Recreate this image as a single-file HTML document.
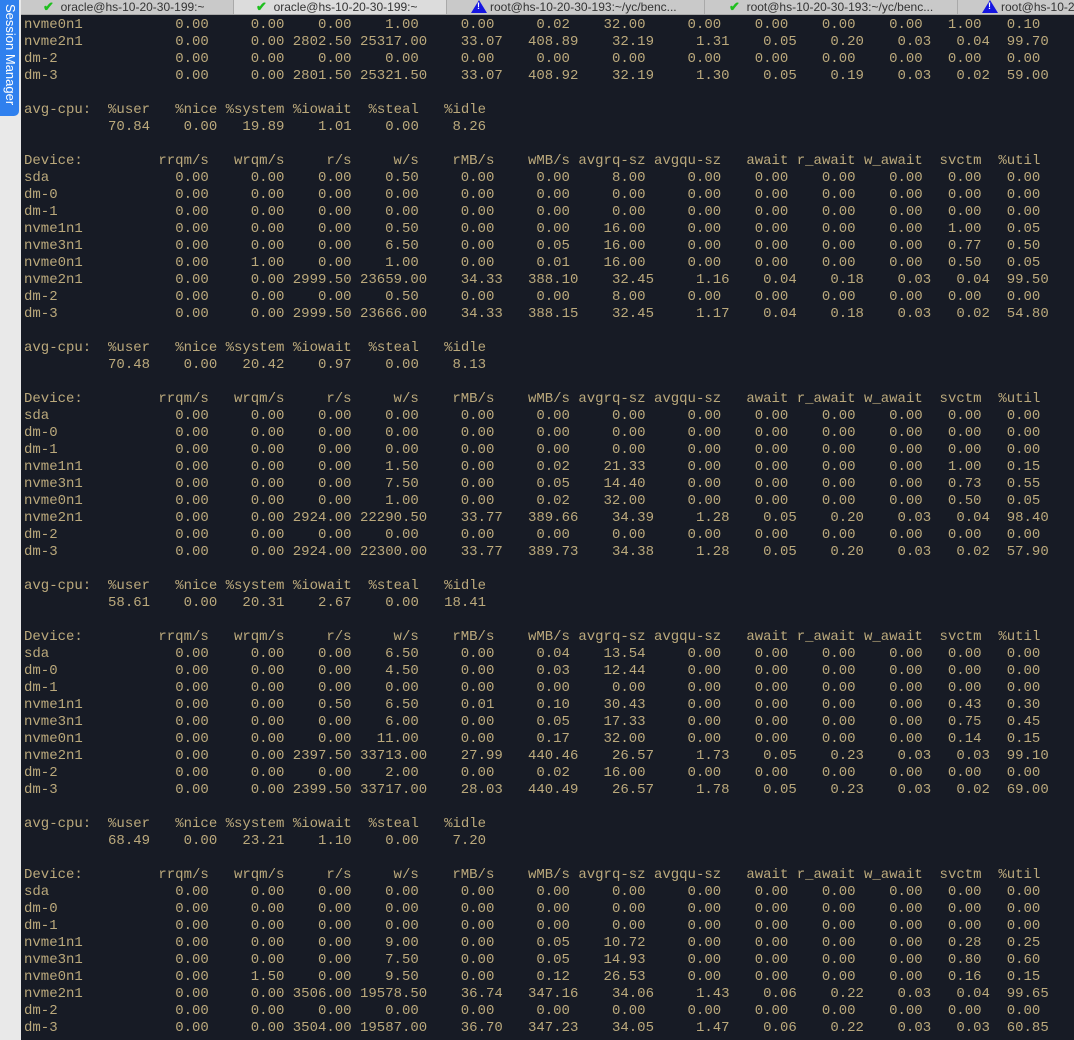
<!DOCTYPE html>
<html><head><meta charset="utf-8"><style>
*{margin:0;padding:0;box-sizing:border-box}
body{width:1074px;height:1040px;overflow:hidden;background:#e9e9e9;position:relative;font-family:"Liberation Sans",sans-serif}
#side{position:absolute;left:0;top:0;width:20px;height:1040px;background:#e9e9e9}
#sm{position:absolute;left:0;top:0;width:19px;height:116px;background:#2f80ee;border-radius:0 0 5px 0}
#sm span{position:absolute;left:19px;top:4px;transform-origin:0 0;transform:rotate(90deg);color:#fff;font-size:13px;white-space:nowrap;line-height:18px}
#tabs{position:absolute;left:21px;top:0;width:1053px;height:15px;background:#c9c9c9;border-bottom:1px solid #a8a8a8;z-index:2}
.t{position:absolute;top:0;height:14px;font-size:12px;line-height:13px;color:#333;border-right:1px solid #a9a9a9;white-space:nowrap;overflow:hidden}
.t.act{background:#dcdcdc}
.ck{color:#1fbf1f;font-weight:bold;font-size:13px}
.wr{display:inline-block;width:0;height:0;border-left:8px solid transparent;border-right:8px solid transparent;border-bottom:13px solid #1515e0;vertical-align:-2px;position:relative;margin-right:3px}
.wr:after{content:"!";position:absolute;left:-2px;top:1px;color:#fff;font-size:9px;font-weight:bold;line-height:11px}
#term{position:absolute;left:21px;top:15px;width:1053px;height:1025px;background:#171b25;color:#bba97c;font-family:"Liberation Mono",monospace;font-size:14px;line-height:17px;padding-left:3px;padding-top:2px}
.r{height:17px;white-space:nowrap}
.r u{display:inline-block;text-decoration:none;text-align:right;margin-left:1ch;white-space:pre}
.r u:nth-child(1){margin-left:0;text-align:left;min-width:13ch}
.r u:nth-child(2),.r u:nth-child(3){min-width:8ch}
.r u:nth-child(4),.r u:nth-child(5){min-width:7ch}
.r u:nth-child(6),.r u:nth-child(7),.r u:nth-child(8),.r u:nth-child(9){min-width:8ch}
.r u:nth-child(10),.r u:nth-child(11),.r u:nth-child(12){min-width:7ch}
.r u:nth-child(13),.r u:nth-child(14){min-width:6ch}
.l{height:17px;white-space:pre}
</style></head><body>
<div id="side"><div id="sm"><span>Session Manager</span></div></div>
<div id="tabs">
<div class="t" style="left:0;width:213px;padding-left:22px"><span class="ck">✔</span>&nbsp; oracle@hs-10-20-30-199:~</div>
<div class="t act" style="left:213px;width:213px;padding-left:22px"><span class="ck">✔</span>&nbsp; oracle@hs-10-20-30-199:~</div>
<div class="t" style="left:426px;width:258px;padding-left:24px"><span class="wr"></span>root@hs-10-20-30-193:~/yc/benc...</div>
<div class="t" style="left:684px;width:253px;padding-left:24px"><span class="ck">✔</span>&nbsp; root@hs-10-20-30-193:~/yc/benc...</div>
<div class="t" style="left:937px;width:116px;padding-left:24px;border-right:none"><span class="wr"></span>root@hs-10-20-30-193</div>
</div>
<div id="term"><div class="r"><u>nvme0n1</u><u>0.00</u><u>0.00</u><u>0.00</u><u>1.00</u><u>0.00</u><u>0.02</u><u>32.00</u><u>0.00</u><u>0.00</u><u>0.00</u><u>0.00</u><u>1.00</u><u>0.10</u></div>
<div class="r"><u>nvme2n1</u><u>0.00</u><u>0.00</u><u>2802.50</u><u>25317.00</u><u>33.07</u><u>408.89</u><u>32.19</u><u>1.31</u><u>0.05</u><u>0.20</u><u>0.03</u><u>0.04</u><u>99.70</u></div>
<div class="r"><u>dm-2</u><u>0.00</u><u>0.00</u><u>0.00</u><u>0.00</u><u>0.00</u><u>0.00</u><u>0.00</u><u>0.00</u><u>0.00</u><u>0.00</u><u>0.00</u><u>0.00</u><u>0.00</u></div>
<div class="r"><u>dm-3</u><u>0.00</u><u>0.00</u><u>2801.50</u><u>25321.50</u><u>33.07</u><u>408.92</u><u>32.19</u><u>1.30</u><u>0.05</u><u>0.19</u><u>0.03</u><u>0.02</u><u>59.00</u></div>
<div class="l"> </div>
<div class="l">avg-cpu:  %user   %nice %system %iowait  %steal   %idle</div>
<div class="l">          70.84    0.00   19.89    1.01    0.00    8.26</div>
<div class="l"> </div>
<div class="r"><u>Device:</u><u>rrqm/s</u><u>wrqm/s</u><u>r/s</u><u>w/s</u><u>rMB/s</u><u>wMB/s</u><u>avgrq-sz</u><u>avgqu-sz</u><u>await</u><u>r_await</u><u>w_await</u><u>svctm</u><u>%util</u></div>
<div class="r"><u>sda</u><u>0.00</u><u>0.00</u><u>0.00</u><u>0.50</u><u>0.00</u><u>0.00</u><u>8.00</u><u>0.00</u><u>0.00</u><u>0.00</u><u>0.00</u><u>0.00</u><u>0.00</u></div>
<div class="r"><u>dm-0</u><u>0.00</u><u>0.00</u><u>0.00</u><u>0.00</u><u>0.00</u><u>0.00</u><u>0.00</u><u>0.00</u><u>0.00</u><u>0.00</u><u>0.00</u><u>0.00</u><u>0.00</u></div>
<div class="r"><u>dm-1</u><u>0.00</u><u>0.00</u><u>0.00</u><u>0.00</u><u>0.00</u><u>0.00</u><u>0.00</u><u>0.00</u><u>0.00</u><u>0.00</u><u>0.00</u><u>0.00</u><u>0.00</u></div>
<div class="r"><u>nvme1n1</u><u>0.00</u><u>0.00</u><u>0.00</u><u>0.50</u><u>0.00</u><u>0.00</u><u>16.00</u><u>0.00</u><u>0.00</u><u>0.00</u><u>0.00</u><u>1.00</u><u>0.05</u></div>
<div class="r"><u>nvme3n1</u><u>0.00</u><u>0.00</u><u>0.00</u><u>6.50</u><u>0.00</u><u>0.05</u><u>16.00</u><u>0.00</u><u>0.00</u><u>0.00</u><u>0.00</u><u>0.77</u><u>0.50</u></div>
<div class="r"><u>nvme0n1</u><u>0.00</u><u>1.00</u><u>0.00</u><u>1.00</u><u>0.00</u><u>0.01</u><u>16.00</u><u>0.00</u><u>0.00</u><u>0.00</u><u>0.00</u><u>0.50</u><u>0.05</u></div>
<div class="r"><u>nvme2n1</u><u>0.00</u><u>0.00</u><u>2999.50</u><u>23659.00</u><u>34.33</u><u>388.10</u><u>32.45</u><u>1.16</u><u>0.04</u><u>0.18</u><u>0.03</u><u>0.04</u><u>99.50</u></div>
<div class="r"><u>dm-2</u><u>0.00</u><u>0.00</u><u>0.00</u><u>0.50</u><u>0.00</u><u>0.00</u><u>8.00</u><u>0.00</u><u>0.00</u><u>0.00</u><u>0.00</u><u>0.00</u><u>0.00</u></div>
<div class="r"><u>dm-3</u><u>0.00</u><u>0.00</u><u>2999.50</u><u>23666.00</u><u>34.33</u><u>388.15</u><u>32.45</u><u>1.17</u><u>0.04</u><u>0.18</u><u>0.03</u><u>0.02</u><u>54.80</u></div>
<div class="l"> </div>
<div class="l">avg-cpu:  %user   %nice %system %iowait  %steal   %idle</div>
<div class="l">          70.48    0.00   20.42    0.97    0.00    8.13</div>
<div class="l"> </div>
<div class="r"><u>Device:</u><u>rrqm/s</u><u>wrqm/s</u><u>r/s</u><u>w/s</u><u>rMB/s</u><u>wMB/s</u><u>avgrq-sz</u><u>avgqu-sz</u><u>await</u><u>r_await</u><u>w_await</u><u>svctm</u><u>%util</u></div>
<div class="r"><u>sda</u><u>0.00</u><u>0.00</u><u>0.00</u><u>0.00</u><u>0.00</u><u>0.00</u><u>0.00</u><u>0.00</u><u>0.00</u><u>0.00</u><u>0.00</u><u>0.00</u><u>0.00</u></div>
<div class="r"><u>dm-0</u><u>0.00</u><u>0.00</u><u>0.00</u><u>0.00</u><u>0.00</u><u>0.00</u><u>0.00</u><u>0.00</u><u>0.00</u><u>0.00</u><u>0.00</u><u>0.00</u><u>0.00</u></div>
<div class="r"><u>dm-1</u><u>0.00</u><u>0.00</u><u>0.00</u><u>0.00</u><u>0.00</u><u>0.00</u><u>0.00</u><u>0.00</u><u>0.00</u><u>0.00</u><u>0.00</u><u>0.00</u><u>0.00</u></div>
<div class="r"><u>nvme1n1</u><u>0.00</u><u>0.00</u><u>0.00</u><u>1.50</u><u>0.00</u><u>0.02</u><u>21.33</u><u>0.00</u><u>0.00</u><u>0.00</u><u>0.00</u><u>1.00</u><u>0.15</u></div>
<div class="r"><u>nvme3n1</u><u>0.00</u><u>0.00</u><u>0.00</u><u>7.50</u><u>0.00</u><u>0.05</u><u>14.40</u><u>0.00</u><u>0.00</u><u>0.00</u><u>0.00</u><u>0.73</u><u>0.55</u></div>
<div class="r"><u>nvme0n1</u><u>0.00</u><u>0.00</u><u>0.00</u><u>1.00</u><u>0.00</u><u>0.02</u><u>32.00</u><u>0.00</u><u>0.00</u><u>0.00</u><u>0.00</u><u>0.50</u><u>0.05</u></div>
<div class="r"><u>nvme2n1</u><u>0.00</u><u>0.00</u><u>2924.00</u><u>22290.50</u><u>33.77</u><u>389.66</u><u>34.39</u><u>1.28</u><u>0.05</u><u>0.20</u><u>0.03</u><u>0.04</u><u>98.40</u></div>
<div class="r"><u>dm-2</u><u>0.00</u><u>0.00</u><u>0.00</u><u>0.00</u><u>0.00</u><u>0.00</u><u>0.00</u><u>0.00</u><u>0.00</u><u>0.00</u><u>0.00</u><u>0.00</u><u>0.00</u></div>
<div class="r"><u>dm-3</u><u>0.00</u><u>0.00</u><u>2924.00</u><u>22300.00</u><u>33.77</u><u>389.73</u><u>34.38</u><u>1.28</u><u>0.05</u><u>0.20</u><u>0.03</u><u>0.02</u><u>57.90</u></div>
<div class="l"> </div>
<div class="l">avg-cpu:  %user   %nice %system %iowait  %steal   %idle</div>
<div class="l">          58.61    0.00   20.31    2.67    0.00   18.41</div>
<div class="l"> </div>
<div class="r"><u>Device:</u><u>rrqm/s</u><u>wrqm/s</u><u>r/s</u><u>w/s</u><u>rMB/s</u><u>wMB/s</u><u>avgrq-sz</u><u>avgqu-sz</u><u>await</u><u>r_await</u><u>w_await</u><u>svctm</u><u>%util</u></div>
<div class="r"><u>sda</u><u>0.00</u><u>0.00</u><u>0.00</u><u>6.50</u><u>0.00</u><u>0.04</u><u>13.54</u><u>0.00</u><u>0.00</u><u>0.00</u><u>0.00</u><u>0.00</u><u>0.00</u></div>
<div class="r"><u>dm-0</u><u>0.00</u><u>0.00</u><u>0.00</u><u>4.50</u><u>0.00</u><u>0.03</u><u>12.44</u><u>0.00</u><u>0.00</u><u>0.00</u><u>0.00</u><u>0.00</u><u>0.00</u></div>
<div class="r"><u>dm-1</u><u>0.00</u><u>0.00</u><u>0.00</u><u>0.00</u><u>0.00</u><u>0.00</u><u>0.00</u><u>0.00</u><u>0.00</u><u>0.00</u><u>0.00</u><u>0.00</u><u>0.00</u></div>
<div class="r"><u>nvme1n1</u><u>0.00</u><u>0.00</u><u>0.50</u><u>6.50</u><u>0.01</u><u>0.10</u><u>30.43</u><u>0.00</u><u>0.00</u><u>0.00</u><u>0.00</u><u>0.43</u><u>0.30</u></div>
<div class="r"><u>nvme3n1</u><u>0.00</u><u>0.00</u><u>0.00</u><u>6.00</u><u>0.00</u><u>0.05</u><u>17.33</u><u>0.00</u><u>0.00</u><u>0.00</u><u>0.00</u><u>0.75</u><u>0.45</u></div>
<div class="r"><u>nvme0n1</u><u>0.00</u><u>0.00</u><u>0.00</u><u>11.00</u><u>0.00</u><u>0.17</u><u>32.00</u><u>0.00</u><u>0.00</u><u>0.00</u><u>0.00</u><u>0.14</u><u>0.15</u></div>
<div class="r"><u>nvme2n1</u><u>0.00</u><u>0.00</u><u>2397.50</u><u>33713.00</u><u>27.99</u><u>440.46</u><u>26.57</u><u>1.73</u><u>0.05</u><u>0.23</u><u>0.03</u><u>0.03</u><u>99.10</u></div>
<div class="r"><u>dm-2</u><u>0.00</u><u>0.00</u><u>0.00</u><u>2.00</u><u>0.00</u><u>0.02</u><u>16.00</u><u>0.00</u><u>0.00</u><u>0.00</u><u>0.00</u><u>0.00</u><u>0.00</u></div>
<div class="r"><u>dm-3</u><u>0.00</u><u>0.00</u><u>2399.50</u><u>33717.00</u><u>28.03</u><u>440.49</u><u>26.57</u><u>1.78</u><u>0.05</u><u>0.23</u><u>0.03</u><u>0.02</u><u>69.00</u></div>
<div class="l"> </div>
<div class="l">avg-cpu:  %user   %nice %system %iowait  %steal   %idle</div>
<div class="l">          68.49    0.00   23.21    1.10    0.00    7.20</div>
<div class="l"> </div>
<div class="r"><u>Device:</u><u>rrqm/s</u><u>wrqm/s</u><u>r/s</u><u>w/s</u><u>rMB/s</u><u>wMB/s</u><u>avgrq-sz</u><u>avgqu-sz</u><u>await</u><u>r_await</u><u>w_await</u><u>svctm</u><u>%util</u></div>
<div class="r"><u>sda</u><u>0.00</u><u>0.00</u><u>0.00</u><u>0.00</u><u>0.00</u><u>0.00</u><u>0.00</u><u>0.00</u><u>0.00</u><u>0.00</u><u>0.00</u><u>0.00</u><u>0.00</u></div>
<div class="r"><u>dm-0</u><u>0.00</u><u>0.00</u><u>0.00</u><u>0.00</u><u>0.00</u><u>0.00</u><u>0.00</u><u>0.00</u><u>0.00</u><u>0.00</u><u>0.00</u><u>0.00</u><u>0.00</u></div>
<div class="r"><u>dm-1</u><u>0.00</u><u>0.00</u><u>0.00</u><u>0.00</u><u>0.00</u><u>0.00</u><u>0.00</u><u>0.00</u><u>0.00</u><u>0.00</u><u>0.00</u><u>0.00</u><u>0.00</u></div>
<div class="r"><u>nvme1n1</u><u>0.00</u><u>0.00</u><u>0.00</u><u>9.00</u><u>0.00</u><u>0.05</u><u>10.72</u><u>0.00</u><u>0.00</u><u>0.00</u><u>0.00</u><u>0.28</u><u>0.25</u></div>
<div class="r"><u>nvme3n1</u><u>0.00</u><u>0.00</u><u>0.00</u><u>7.50</u><u>0.00</u><u>0.05</u><u>14.93</u><u>0.00</u><u>0.00</u><u>0.00</u><u>0.00</u><u>0.80</u><u>0.60</u></div>
<div class="r"><u>nvme0n1</u><u>0.00</u><u>1.50</u><u>0.00</u><u>9.50</u><u>0.00</u><u>0.12</u><u>26.53</u><u>0.00</u><u>0.00</u><u>0.00</u><u>0.00</u><u>0.16</u><u>0.15</u></div>
<div class="r"><u>nvme2n1</u><u>0.00</u><u>0.00</u><u>3506.00</u><u>19578.50</u><u>36.74</u><u>347.16</u><u>34.06</u><u>1.43</u><u>0.06</u><u>0.22</u><u>0.03</u><u>0.04</u><u>99.65</u></div>
<div class="r"><u>dm-2</u><u>0.00</u><u>0.00</u><u>0.00</u><u>0.00</u><u>0.00</u><u>0.00</u><u>0.00</u><u>0.00</u><u>0.00</u><u>0.00</u><u>0.00</u><u>0.00</u><u>0.00</u></div>
<div class="r"><u>dm-3</u><u>0.00</u><u>0.00</u><u>3504.00</u><u>19587.00</u><u>36.70</u><u>347.23</u><u>34.05</u><u>1.47</u><u>0.06</u><u>0.22</u><u>0.03</u><u>0.03</u><u>60.85</u></div></div>
</body></html>
